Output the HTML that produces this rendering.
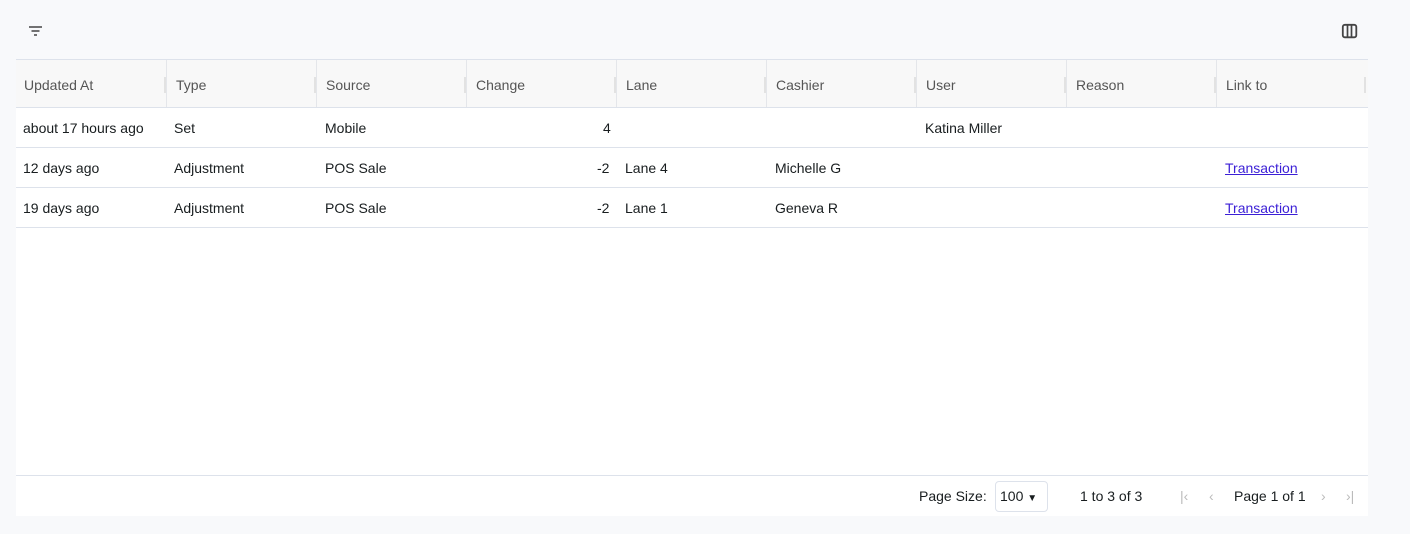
<!DOCTYPE html>
<html><head><style>
body{margin:0;width:1410px;height:534px;background:#f8f9fb;font-family:"Liberation Sans",sans-serif;font-size:14px;color:#181d1f;position:relative;overflow:hidden}
.grid{position:absolute;left:16px;top:59px;width:1352px;height:456px;background:#fff;border-top:1px solid #dde2eb}
.hdr{position:absolute;left:0;top:0;width:1352px;height:47px;background:#f8f8f8;border-bottom:1px solid #dde2eb}
.hc{position:absolute;top:0;height:47px;line-height:50px;color:#555;padding-left:8px;box-sizing:border-box;width:150px}
.hc:after{content:"";position:absolute;right:0;top:17px;height:16px;width:2px;background:#e2e2e2}
.hc.b{border-left:1px solid #e4e6ea;padding-left:9px}
.row{position:absolute;left:0;width:1352px;height:39px;border-bottom:1px solid #dde2eb}
.c{position:absolute;top:0;line-height:40px}
a{color:#3b1fd6;text-decoration:underline}
.foot{position:absolute;left:0;top:415px;width:1352px;height:40px;border-top:1px solid #dde2eb}
.f{position:absolute;top:0;line-height:40px}
.sel{position:absolute;left:979px;top:5px;width:53px;height:31px;border:1px solid #dde2eb;border-radius:4px;box-sizing:border-box;line-height:29px;padding-left:4px}
.g{color:#bbb}
</style></head><body>
<svg style="position:absolute;left:28px;top:24px" width="16" height="14"><path d="M1 3h13M3.5 7h8M6 11h3" stroke="#444" stroke-width="1.5"/></svg>
<svg style="position:absolute;left:1341px;top:22px" width="18" height="18"><rect x="1.8" y="2.8" width="13.5" height="12.5" rx="2" fill="none" stroke="#444" stroke-width="1.8"/><path d="M6.5 3v12M10.5 3v12" stroke="#444" stroke-width="1.7"/></svg>
<div class="grid">
<div class="hdr">
<div class="hc" style="left:0">Updated At</div>
<div class="hc b" style="left:150px">Type</div>
<div class="hc b" style="left:300px">Source</div>
<div class="hc b" style="left:450px">Change</div>
<div class="hc b" style="left:600px">Lane</div>
<div class="hc b" style="left:750px">Cashier</div>
<div class="hc b" style="left:900px">User</div>
<div class="hc b" style="left:1050px">Reason</div>
<div class="hc b" style="left:1200px">Link to</div>
</div>
<div class="row" style="top:48px">
<div class="c" style="left:7px">about 17 hours ago</div><div class="c" style="left:158px">Set</div><div class="c" style="left:309px">Mobile</div><div class="c" style="left:587px">4</div><div class="c" style="left:909px">Katina Miller</div>
</div>
<div class="row" style="top:88px">
<div class="c" style="left:7px">12 days ago</div><div class="c" style="left:158px">Adjustment</div><div class="c" style="left:309px">POS Sale</div><div class="c" style="left:581px">-2</div><div class="c" style="left:609px">Lane 4</div><div class="c" style="left:759px">Michelle G</div><div class="c" style="left:1209px"><a>Transaction</a></div>
</div>
<div class="row" style="top:128px">
<div class="c" style="left:7px">19 days ago</div><div class="c" style="left:158px">Adjustment</div><div class="c" style="left:309px">POS Sale</div><div class="c" style="left:581px">-2</div><div class="c" style="left:609px">Lane 1</div><div class="c" style="left:759px">Geneva R</div><div class="c" style="left:1209px"><a>Transaction</a></div>
</div>
<div class="foot">
<div class="f" style="left:903px">Page Size:</div>
<div class="sel">100 <span style="font-size:10px">▼</span></div>
<div class="f" style="left:1064px">1 to 3 of 3</div>
<div class="f g" style="left:1164px">|‹</div>
<div class="f g" style="left:1193px">‹</div>
<div class="f" style="left:1218px">Page 1 of 1</div>
<div class="f g" style="left:1305px">›</div>
<div class="f g" style="left:1330px">›|</div>
</div>
</div>
</body></html>
